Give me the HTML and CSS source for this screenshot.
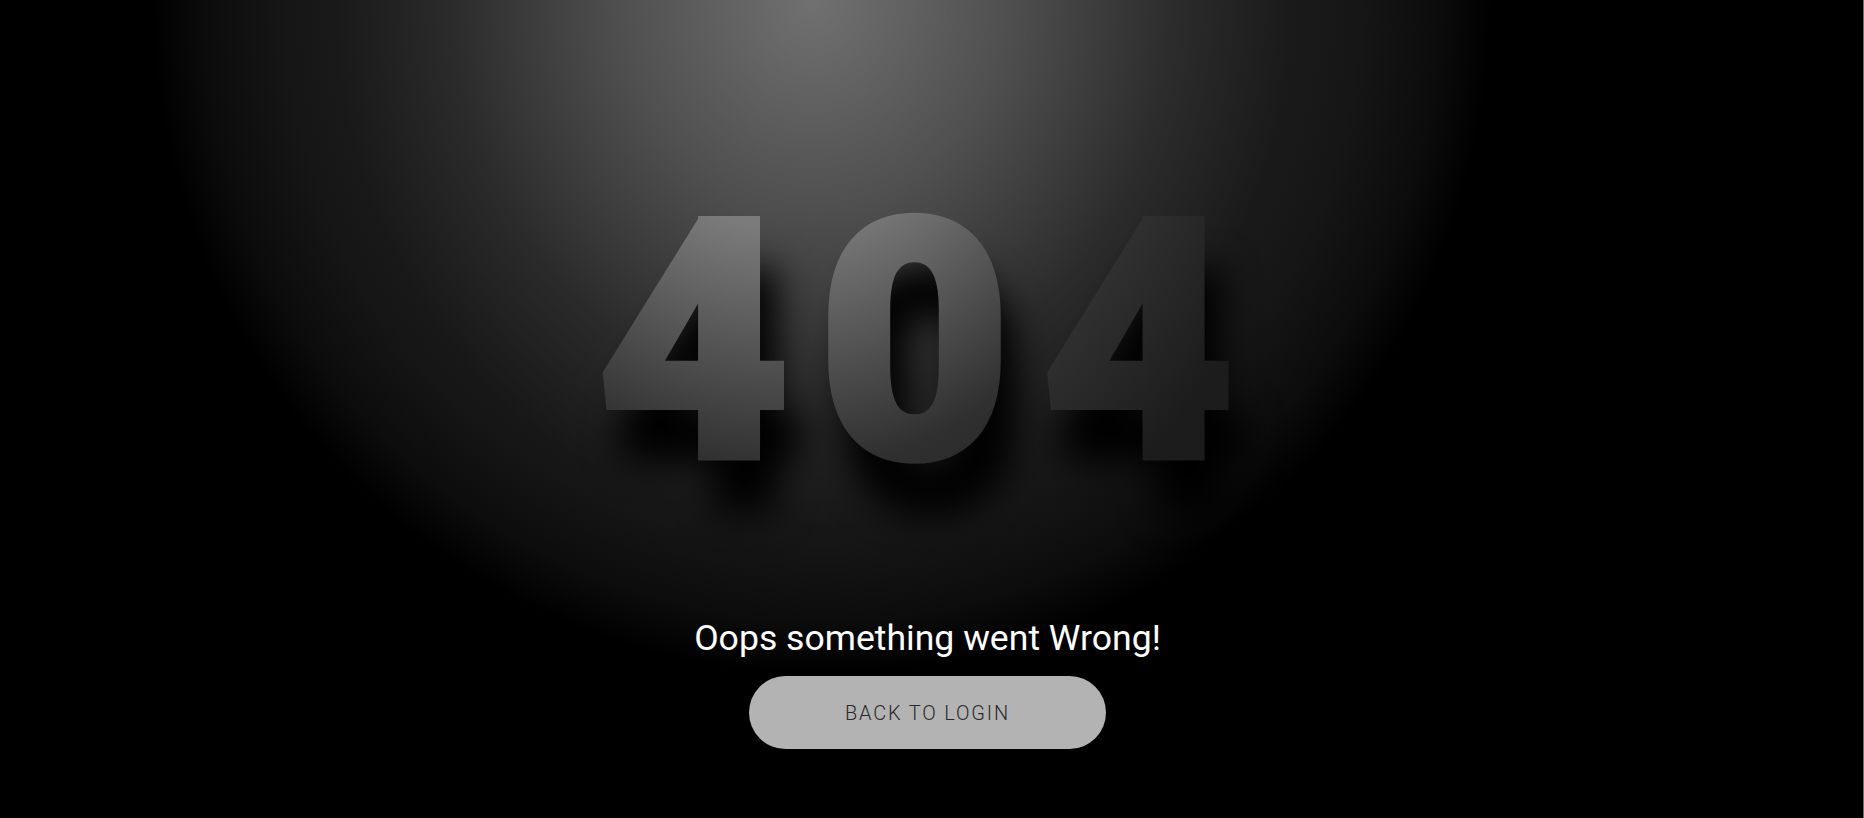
FILE: index.html
```html
<!DOCTYPE html>
<html lang="en">
<head>
<meta charset="utf-8">
<title>404 - Page not found</title>
<link rel="stylesheet" href="styles.css">
</head>
<body>
<main class="page">
  <h1 class="code">
    <svg class="code-svg" width="700" height="340" viewBox="0 0 700 340">
      <defs>
        <radialGradient id="digitFill" gradientUnits="userSpaceOnUse" cx="0" cy="0" r="549" gradientTransform="translate(202.5 -225) scale(1 1.2444)">
          <stop offset="0" stop-color="#9a9a9a"/>
          <stop offset="0.41" stop-color="#7a7a7a"/>
          <stop offset="0.762" stop-color="#303030"/>
          <stop offset="1" stop-color="#1c1c1c"/>
        </radialGradient>
      </defs>
      <text class="digits" x="115.5 336.5 560" y="282" text-anchor="middle">404</text>
    </svg>
  </h1>
  <h2 class="message">Oops something went Wrong!</h2>
  <a class="btn" href="#">BACK TO LOGIN</a>
</main>
</body>
</html>
```

FILE: styles.css
```css
html, body {
  margin: 0;
  height: 100%;
}

body {
  background: #000;
  font-family: Roboto, "Noto Sans", "Liberation Sans", sans-serif;
  overflow: hidden;
}

.page {
  box-sizing: border-box;
  min-height: 100vh;
  display: flex;
  flex-direction: column;
  align-items: center;
  padding: 175px 8px 0 0;
  border-right: 1px solid #6e6e6e;
  background:
    radial-gradient(ellipse 480px 530px at 812px 0,
      rgba(255,255,255,.3) 0%,
      rgba(255,255,255,.18) 40%,
      rgba(255,255,255,.05) 75%,
      rgba(255,255,255,0) 100%),
    radial-gradient(ellipse 670px 675px at 822px 0,
      #333 0%,
      #222 50%,
      #161616 80%,
      #0c0c0c 92%,
      #000 100%);
}

.code {
  margin: 0;
  line-height: 0;
}

.code-svg {
  display: block;
  overflow: visible;
  filter: drop-shadow(16px 52px 18px #000);
}

.digits {
  font-family: Roboto, "Noto Sans", sans-serif;
  font-size: 334px;
  font-weight: 900;
  fill: url(#digitFill);
  stroke: url(#digitFill);
  stroke-width: 7px;
  stroke-linejoin: miter;
  stroke-miterlimit: 10;
  paint-order: stroke;
}

.message {
  margin: 102px 0 0;
  font-size: 35.6px;
  font-weight: 400;
  line-height: 42px;
  color: #fff;
}

.btn {
  margin-top: 17px;
  width: 357px;
  height: 73px;
  border-radius: 37px;
  background: #b3b3b3;
  color: #2a2a2a;
  font-size: 20px;
  font-weight: 300;
  letter-spacing: 1.8px;
  display: flex;
  align-items: center;
  justify-content: center;
  text-decoration: none;
}
```
